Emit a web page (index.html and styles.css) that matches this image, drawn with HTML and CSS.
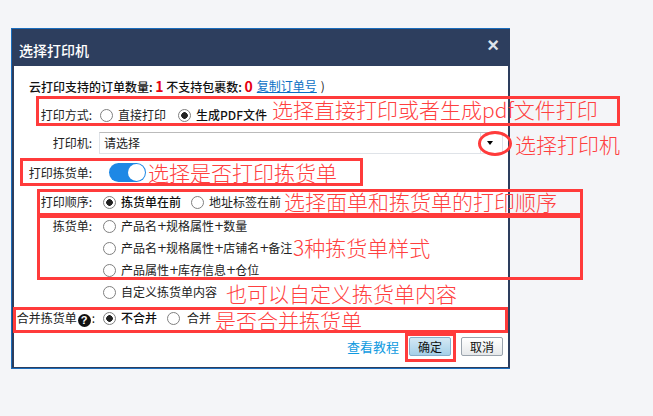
FILE: index.html
```html
<!DOCTYPE html>
<html>
<head>
<meta charset="utf-8" />
<title>选择打印机</title>
<link rel="stylesheet" href="styles.css">
</head>
<body>

<div class="dialog">
  <div class="dialog-head">
    <span class="dialog-title">选择打印机</span>
    <span class="dialog-close">×</span>
  </div>
  <div class="dialog-body">
    <div class="row row-count">
      <b>云打印支持的订单数量: <i>1</i> 不支持包裹数: <i>0</i></b>
      <a href="#">复制订单号</a> )
    </div>
    <div class="row row-mode">
      <span class="label">打印方式:</span>
      <label class="opt"><input type="radio" name="mode">直接打印</label>
      <label class="opt"><input type="radio" name="mode" checked><b>生成PDF文件</b></label>
    </div>
    <div class="row row-printer">
      <span class="label">打印机:</span>
      <div class="select"><span>请选择</span><span class="select-arrow"></span></div>
    </div>
    <div class="row row-pick">
      <span class="label">打印拣货单:</span>
      <span class="toggle"><span class="knob"></span></span>
    </div>
    <div class="row row-order">
      <span class="label">打印顺序:</span>
      <label class="opt"><input type="radio" name="order" checked><b>拣货单在前</b></label>
      <label class="opt"><input type="radio" name="order">地址标签在前</label>
    </div>
    <div class="row row-style">
      <span class="label">拣货单:</span>
      <div class="opt-list">
        <label class="opt"><input type="radio" name="style">产品名<span class="plus">+</span>规格属性<span class="plus">+</span>数量</label>
        <label class="opt"><input type="radio" name="style">产品名<span class="plus">+</span>规格属性<span class="plus">+</span>店铺名<span class="plus">+</span>备注</label>
        <label class="opt"><input type="radio" name="style">产品属性<span class="plus">+</span>库存信息<span class="plus">+</span>仓位</label>
        <label class="opt"><input type="radio" name="style">自定义拣货单内容</label>
      </div>
    </div>
    <div class="row row-merge">
      <span class="label">合并拣货单<span class="help">?</span>:</span>
      <label class="opt"><input type="radio" name="merge" checked><b>不合并</b></label>
      <label class="opt"><input type="radio" name="merge">合并</label>
    </div>
    <div class="dialog-foot">
      <a class="tutorial" href="#">查看教程</a>
      <button class="btn btn-ok">确定</button>
      <button class="btn">取消</button>
    </div>
  </div>
</div>

<!-- red notes drawn over the screenshot -->
<div class="mark mark-mode"></div>
<div class="mark mark-pick"></div>
<div class="mark mark-order"></div>
<div class="mark mark-style"></div>
<div class="mark mark-merge"></div>
<div class="mark mark-ok"></div>
<div class="mark mark-arrow"></div>

<span class="note note-mode">选择直接打印或者生成pdf文件打印</span>
<span class="note note-printer">选择打印机</span>
<span class="note note-pick">选择是否打印拣货单</span>
<span class="note note-order">选择面单和拣货单的打印顺序</span>
<span class="note note-style">3种拣货单样式</span>
<span class="note note-custom">也可以自定义拣货单内容</span>
<span class="note note-merge">是否合并拣货单</span>

</body>
</html>
```

FILE: styles.css
```css
html, body {
  margin: 0;
  padding: 0;
}
body {
  position: relative;
  width: 653px;
  height: 416px;
  overflow: hidden;
  background: #f4f5f8;
  color: #222;
  font: 12px/18px "Noto Sans CJK SC", "Liberation Sans", sans-serif;
}
.dialog {
  box-sizing: border-box;
  width: 499px;
  height: 341px;
  margin: 28px 0 0 11px;
  background: #2d3e5e;
  border: 1px solid #1a6dbd;
  border-width: 1px 0 1px 1px;
  position: absolute;
}
.dialog-head {
  display: flex;
  justify-content: space-between;
  height: 37px;
  padding: 0 11px 0 7px;
  color: #fff;
}
.dialog-title {
  font-size: 14px;
  font-weight: 500;
  line-height: 43px;
}
.dialog-close {
  font: bold 20px/32px "Liberation Sans", sans-serif;
  color: #dde2ea;
}
.dialog-body {
  box-sizing: border-box;
  height: 301px;
  margin: 0 2px 0 2px;
  background: #fff;
}
.row {
  display: flex;
  align-items: center;
}
.row-count {
  height: 18px;
  padding: 11px 0 0 15px;
  gap: 4px;
}
.row-count b {
  font-weight: 500;
  color: #111;
}
.row-count i {
  font-style: normal;
  font-size: 14px;
  font-weight: 700;
  color: #e60012;
}
.row-count a {
  color: #0b6fc4;
}
.row-mode {
  margin-top: 11px;
  height: 18px;
}
.label {
  box-sizing: border-box;
  width: 78px;
  text-align: right;
  flex: none;
  white-space: nowrap;
}
.opt {
  display: flex;
  align-items: center;
  white-space: nowrap;
}
.opt b {
  font-weight: 500;
  color: #111;
}
.opt input {
  appearance: none;
  box-sizing: border-box;
  width: 13px;
  height: 13px;
  margin: 0 5px 0 0;
  border: 1px solid #808080;
  border-radius: 50%;
  background: #fff;
}
.opt input:checked {
  background: radial-gradient(circle, #222 0 3px, #fff 3.6px);
}
.plus {
  font-family: "DejaVu Sans", sans-serif;
  letter-spacing: -1px;
}
.row-mode .opt:nth-child(2) {
  margin: 0 12px 0 8px;
}
.row-printer {
  margin-top: 8px;
  height: 22px;
}
.select {
  box-sizing: border-box;
  display: flex;
  justify-content: space-between;
  align-items: center;
  width: 404px;
  height: 22px;
  margin-left: 7px;
  padding: 0 0 0 4px;
  border: 1px solid #dfe3e8;
  border-top-color: #bbb;
}
.select-arrow {
  width: 21px;
  height: 20px;
  border-left: 1px solid #dfe3e8;
  position: relative;
}
.select-arrow::after {
  content: "";
  position: absolute;
  left: 6px;
  top: 8px;
  border: 3px solid transparent;
  border-top: 4px solid #000;
  border-bottom: 0;
}
.row-pick {
  margin-top: 9px;
  height: 19px;
}
.toggle {
  display: flex;
  justify-content: flex-end;
  box-sizing: border-box;
  width: 37px;
  height: 19px;
  margin-left: 17px;
  padding: 1px;
  border-radius: 10px;
  background: #1e88e5;
}
.knob {
  width: 17px;
  height: 17px;
  border-radius: 50%;
  background: #fff;
}
.row-order {
  margin-top: 11px;
  height: 18px;
}
.row-order .label + .opt {
  margin: 0 10px 0 11px;
}
.row-merge .label + .opt {
  margin: 0 10px 0 8px;
}
.row-style {
  margin-top: 6px;
  align-items: flex-start;
}
.opt-list {
  display: flex;
  flex-direction: column;
  gap: 4px;
  margin-left: 11px;
}
.row-merge {
  margin-top: 8px;
  height: 18px;
}
.row-merge .label {
  width: 81px;
}
.row-merge .opt:last-child input {
  margin-right: 7px;
}
.help {
  display: inline-block;
  width: 13px;
  height: 13px;
  margin: 0 1px;
  border-radius: 50%;
  background: #111;
  color: #fff;
  font: bold 11px/13px "Liberation Sans", sans-serif;
  text-align: center;
  vertical-align: -1px;
}
.dialog-foot {
  display: flex;
  justify-content: flex-end;
  align-items: center;
  margin-top: 10px;
  padding-right: 5px;
}
.tutorial {
  margin-right: 10px;
  font-size: 13px;
  color: #0f9ae0;
  text-decoration: none;
}
.btn {
  box-sizing: border-box;
  width: 42px;
  height: 19px;
  padding: 0;
  border: 1px solid #9aa3ad;
  border-radius: 2px;
  background: linear-gradient(#fff, #e6e8ea);
  font: inherit;
  line-height: 16px;
  color: #111;
}
.btn-ok {
  margin-right: 10px;
  border-color: #86aecb;
  background: linear-gradient(#d4e8f4, #a5d0e8);
}
.mark {
  position: absolute;
  box-sizing: border-box;
  border: 3px solid #ff3b3b;
}
.mark-mode { left: 36px; top: 96px; width: 584px; height: 30px; }
.mark-pick { left: 20px; top: 158px; width: 343px; height: 28px; }
.mark-order { left: 37px; top: 189px; width: 546px; height: 27px; }
.mark-style { left: 37px; top: 215px; width: 546px; height: 65px; }
.mark-merge { left: 13px; top: 307px; width: 495px; height: 26px; }
.mark-ok { left: 405px; top: 333px; width: 51px; height: 29px; }
.mark-arrow { left: 478px; top: 131px; width: 34px; height: 25px; border-radius: 50%; }
.note {
  position: absolute;
  color: #ff4040;
  font-size: 21px;
  font-weight: 300;
  line-height: 24px;
  white-space: nowrap;
}
.note-mode { left: 272px; top: 97px; }
.note-printer { left: 515px; top: 132px; }
.note-pick { left: 148px; top: 160px; }
.note-order { left: 284px; top: 189px; }
.note-style { left: 293px; top: 235px; }
.note-custom { left: 226px; top: 281px; }
.note-merge { left: 215px; top: 308px; }
```
